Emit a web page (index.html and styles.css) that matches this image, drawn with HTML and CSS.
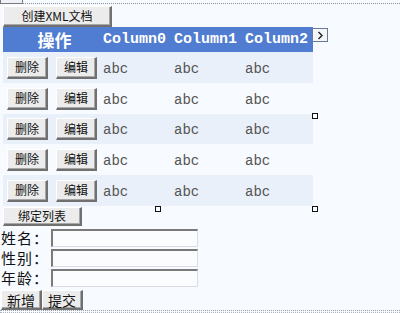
FILE: index.html
```html
<!DOCTYPE html>
<html>
<head>
<meta charset="utf-8">
<link rel="stylesheet" href="styles.css">
</head>
<body>
<div class="designer">
  <div class="body-tag"></div>
  <div class="top-rule"></div>
  <div class="content">
    <button class="btn btn-create">创建XML文档</button>
    <div class="grid-wrap">
      <table class="grid">
        <colgroup><col class="w-ops"><col class="w-col"><col class="w-col"><col class="w-col"></colgroup>
        <thead>
          <tr class="hdr">
            <th class="c-ops">操作</th>
            <th class="c-col">Column0</th>
            <th class="c-col">Column1</th>
            <th class="c-col">Column2</th>
          </tr>
        </thead>
        <tbody>
          <tr class="row odd"><td><div class="ops"><button class="btn btn-sm">删除</button><button class="btn btn-sm">编辑</button></div></td><td>abc</td><td>abc</td><td>abc</td></tr>
          <tr class="row even"><td><div class="ops"><button class="btn btn-sm">删除</button><button class="btn btn-sm">编辑</button></div></td><td>abc</td><td>abc</td><td>abc</td></tr>
          <tr class="row odd r-short"><td><div class="ops"><button class="btn btn-sm">删除</button><button class="btn btn-sm">编辑</button></div></td><td>abc</td><td>abc</td><td>abc</td></tr>
          <tr class="row even"><td><div class="ops"><button class="btn btn-sm">删除</button><button class="btn btn-sm">编辑</button></div></td><td>abc</td><td>abc</td><td>abc</td></tr>
          <tr class="row odd"><td><div class="ops"><button class="btn btn-sm">删除</button><button class="btn btn-sm">编辑</button></div></td><td>abc</td><td>abc</td><td>abc</td></tr>
        </tbody>
      </table>
      <div class="smart-tag"><svg width="7" height="9" viewBox="0 0 7 9"><path d="M1.5 1 L5 4.5 L1.5 8" fill="none" stroke="#222" stroke-width="1.4"/></svg></div>
      <div class="handle h-mid-right"></div>
      <div class="handle h-bottom-center"></div>
      <div class="handle h-bottom-right"></div>
    </div>
    <button class="btn btn-bind">绑定列表</button>
    <div class="form">
      <div class="frow"><span class="lbl">姓名：</span><span class="tb"></span></div>
      <div class="frow"><span class="lbl">性别：</span><span class="tb"></span></div>
      <div class="frow"><span class="lbl">年龄：</span><span class="tb"></span></div>
    </div>
    <div class="actions">
      <button class="btn btn-act">新增</button><button class="btn btn-act">提交</button>
    </div>
  </div>
  <div class="bottom-rule"></div>
</div>
</body>
</html>
```

FILE: styles.css
```css
html, body {
  margin: 0;
  padding: 0;
  background: #f7fafe;
}
body {
  width: 400px;
  height: 313px;
  overflow: hidden;
  font-family: "Noto Sans CJK SC", "DejaVu Sans", sans-serif;
}
.designer {
  position: relative;
  width: 400px;
  height: 313px;
}
.body-tag {
  position: absolute;
  left: 0;
  top: 0;
  width: 21px;
  height: 3px;
  border: 1px solid #7a7a7a;
  border-top: none;
  background: #eef2f8;
}
.top-rule {
  position: absolute;
  left: 22px;
  right: 0;
  top: 3px;
  border-top: 1px dotted #8a9099;
}
.bottom-rule {
  position: absolute;
  left: 0;
  right: 0;
  top: 310px;
  height: 1px;
  border-top: 1px dotted #9aa0aa;
  border-bottom: 1px dotted #b0b6c0;
}
.content {
  padding: 6px 0 0 3px;
  display: flex;
  flex-direction: column;
  align-items: flex-start;
}
.btn {
  box-sizing: border-box;
  margin: 0;
  padding: 0;
  background: #ececec;
  border-style: solid;
  border-width: 1px 2px 2px 1px;
  border-color: #ffffff #707070 #707070 #ffffff;
  box-shadow: inset -1px -1px 0 #a8a8a8;
  font-family: "Noto Sans CJK SC", sans-serif;
  font-size: 12px;
  color: #111;
  line-height: 1;
  display: inline-flex;
  align-items: center;
  justify-content: center;
  white-space: nowrap;
  flex: none;
}
.btn-create {
  width: 109px;
  height: 21px;
}
.grid-wrap {
  position: relative;
  width: 325px;
}
.grid {
  border-collapse: collapse;
  border-spacing: 0;
  width: 309px;
  table-layout: fixed;
}
.w-ops { width: 97px; }
.w-col { width: 71px; }
.grid th, .grid td {
  padding: 0;
}
.hdr {
  background: #507cd1;
  height: 24px;
  color: #fff;
}
.hdr th {
  font-family: "Liberation Mono", monospace;
  font-weight: bold;
  font-size: 15px;
  text-align: left;
  padding-left: 3px;
  vertical-align: middle;
  white-space: nowrap;
}
.hdr th.c-ops {
  text-align: center;
  font-family: "Noto Sans CJK SC", sans-serif;
  font-size: 17px;
  padding-left: 6px;
}
.row {
  height: 31px;
}
.row.r-short { height: 30px; }
.row.odd { background: #eaf0fa; }
.row.even { background: #f7fafe; }
.row td {
  font-family: "Liberation Mono", monospace;
  font-size: 14px;
  color: #555;
  padding-left: 3px;
  padding-top: 2px;
  vertical-align: middle;
}
.row td:first-child {
  padding: 0;
}
.ops {
  display: flex;
  gap: 8px;
  padding-left: 4px;
}
.btn-sm {
  width: 41px;
  height: 22px;
}
.smart-tag {
  position: absolute;
  left: 309px;
  top: 1px;
  width: 14px;
  height: 12px;
  border: 1px solid #6a7a94;
  background: #f4f6fa;
  display: flex;
  align-items: center;
  justify-content: center;
}
.handle {
  position: absolute;
  width: 4px;
  height: 4px;
  border: 1px solid #111;
  background: #fff;
}
.h-mid-right { left: 309px; top: 86px; }
.h-bottom-center { left: 152px; top: 179px; }
.h-bottom-right { left: 309px; top: 179px; }
.btn-bind {
  width: 79px;
  height: 19px;
  margin-top: 1px;
}
.form {
  margin-top: 2px;
  margin-left: -2px;
  display: flex;
  flex-direction: column;
}
.frow {
  display: flex;
  align-items: center;
  height: 20px;
}
.lbl {
  width: 50px;
  font-size: 15px;
  letter-spacing: 1px;
  color: #111;
  line-height: 20px;
  white-space: nowrap;
}
.tb {
  box-sizing: border-box;
  width: 147px;
  height: 18px;
  background: #fbfcfe;
  border-style: solid;
  border-width: 2px 1px 1px 2px;
  border-color: #7a7a7a #d8dce4 #d8dce4 #7a7a7a;
}
.actions {
  display: flex;
  margin-top: 2px;
  margin-left: -2px;
}
.btn-act {
  width: 41px;
  height: 20px;
  font-size: 14px;
}
```
